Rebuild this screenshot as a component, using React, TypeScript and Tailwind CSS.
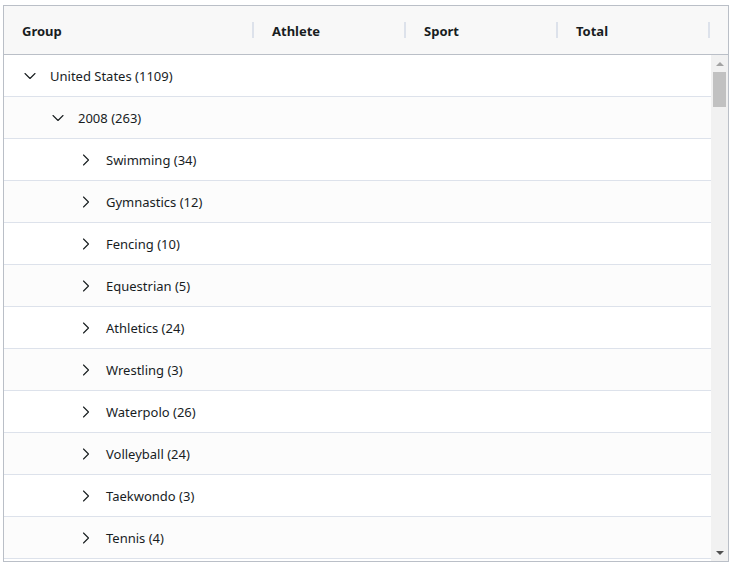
import { ChevronDown, ChevronRight } from "lucide-react";

interface GroupRow {
  label: string;
  count: number;
  level: number;
  expanded: boolean;
}

const rows: GroupRow[] = [
  { label: "United States", count: 1109, level: 0, expanded: true },
  { label: "2008", count: 263, level: 1, expanded: true },
  { label: "Swimming", count: 34, level: 2, expanded: false },
  { label: "Gymnastics", count: 12, level: 2, expanded: false },
  { label: "Fencing", count: 10, level: 2, expanded: false },
  { label: "Equestrian", count: 5, level: 2, expanded: false },
  { label: "Athletics", count: 24, level: 2, expanded: false },
  { label: "Wrestling", count: 3, level: 2, expanded: false },
  { label: "Waterpolo", count: 26, level: 2, expanded: false },
  { label: "Volleyball", count: 24, level: 2, expanded: false },
  { label: "Taekwondo", count: 3, level: 2, expanded: false },
  { label: "Tennis", count: 4, level: 2, expanded: false },
];

const columns = [
  { name: "Group", width: "w-[250px]" },
  { name: "Athlete", width: "w-[152px]" },
  { name: "Sport", width: "w-[152px]" },
  { name: "Total", width: "w-[152px]" },
];

const indents = ["pl-[16px]", "pl-[44px]", "pl-[72px]"];

export default function App() {
  return (
    <div
      className="pl-[3px] pt-[5px] bg-white text-[13px] text-[#181d1f]"
      style={{ fontFamily: '"Segoe UI", "Noto Sans", "Open Sans", sans-serif' }}
    >
      <div className="w-[726px] h-[557px] border border-[#babfc7] flex flex-col">
        {/* header */}
        <div className="h-[49px] shrink-0 flex bg-[#f8f8f8] border-b border-[#babfc7]">
          {columns.map((col) => (
            <div key={col.name} className={`${col.width} flex items-center justify-between pl-[18px] shrink-0`}>
              <span className="font-bold pt-[3px]">{col.name}</span>
              <span className="w-[2px] h-[16px] bg-[#dde2eb]" />
            </div>
          ))}
        </div>

        {/* body */}
        <div className="flex flex-1 min-h-0">
          <div className="flex-1 overflow-hidden">
            {rows.map((row, i) => (
              <div
                key={row.label}
                className={`h-[42px] flex items-center border-b border-[#dde2eb] ${
                  i % 2 === 0 ? "bg-white" : "bg-[#fcfcfc]"
                } ${indents[row.level]}`}
              >
                {row.expanded ? (
                  <ChevronDown size={20} strokeWidth={1.3} className="text-[#181d1f] mt-[1px]" />
                ) : (
                  <ChevronRight size={20} strokeWidth={1.3} className="text-[#181d1f] mt-[1px]" />
                )}
                <span className="ml-[10px] pt-[2px]">
                  {row.label} ({row.count})
                </span>
              </div>
            ))}
          </div>

          {/* scrollbar */}
          <div className="w-[17px] shrink-0 bg-[#f1f1f1] flex flex-col items-center">
            <div className="h-[17px] flex items-center justify-center">
              <div className="w-0 h-0 border-l-[4px] border-r-[4px] border-b-[4px] border-l-transparent border-r-transparent border-b-[#a3a3a3]" />
            </div>
            <div className="w-[13px] h-[35px] bg-[#c1c1c1]" />
            <div className="flex-1" />
            <div className="h-[17px] flex items-center justify-center">
              <div className="w-0 h-0 border-l-[4px] border-r-[4px] border-t-[4px] border-l-transparent border-r-transparent border-t-[#505050]" />
            </div>
          </div>
        </div>
      </div>
    </div>
  );
}
